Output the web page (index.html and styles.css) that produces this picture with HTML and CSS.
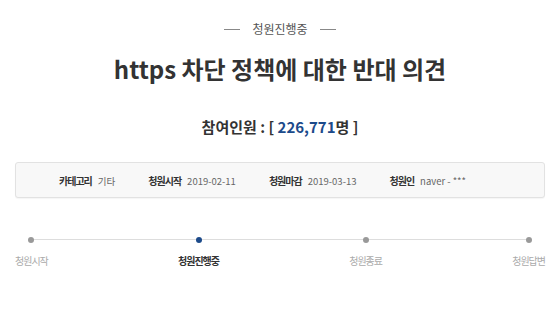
FILE: index.html
```html
<!DOCTYPE html>
<html>

<head>
    <title>청원진행중</title>
    <link rel="stylesheet" href="styles.css">
</head>

<body>
    <div class="page">
        <div class="status"><span class="dash"></span>청원진행중<span class="dash"></span></div>

        <h1 class="title">https 차단 정책에 대한 반대 의견</h1>

        <p class="count">참여인원 : [ <span class="num">226,771</span>명 ]</p>

        <div class="info">
            <div class="info-item"><span class="info-label">카테고리</span><span>기타</span></div>
            <div class="info-item"><span class="info-label">청원시작</span><span>2019-02-11</span></div>
            <div class="info-item"><span class="info-label">청원마감</span><span>2019-03-13</span></div>
            <div class="info-item"><span class="info-label">청원인</span><span>naver - ***</span></div>
        </div>

        <div class="progress">
            <div class="step">
                <span class="dot"></span>
                <span class="step-label">청원시작</span>
            </div>
            <div class="step active">
                <span class="dot"></span>
                <span class="step-label">청원진행중</span>
            </div>
            <div class="step">
                <span class="dot"></span>
                <span class="step-label">청원종료</span>
            </div>
            <div class="step">
                <span class="dot"></span>
                <span class="step-label">청원답변</span>
            </div>
        </div>
    </div>
</body>

</html>
```

FILE: styles.css
```css
body {
    margin: 0;
    background-color: #fff;
    font-family: "Noto Sans CJK KR", "Noto Sans", sans-serif;
    color: #333;
}

.page {
    padding: 21px 15px 0 15px;
}

.status {
    display: flex;
    justify-content: center;
    align-items: center;
    gap: 12px;
    font-size: 12px;
    line-height: 16px;
    color: #555;
}

.dash {
    width: 16px;
    height: 1px;
    background-color: #888;
}

.title {
    margin: 16px 0 0 0;
    text-align: center;
    font-size: 24px;
    line-height: 32px;
    font-weight: bold;
    color: #333;
}

.count {
    margin: 32px 0 0 0;
    text-align: center;
    font-size: 15px;
    line-height: 20px;
    font-weight: bold;
    color: #333;
}

.count .num {
    color: #1c4a8a;
}

.info {
    margin-top: 25px;
    height: 34px;
    display: flex;
    align-items: center;
    gap: 33px;
    padding-left: 43px;
    background-color: #f8f8f8;
    border: 1px solid #e2e2e2;
    border-radius: 3px;
    box-shadow: 0 1px 1px rgba(0, 0, 0, 0.04);
    font-size: 9.5px;
    color: #666;
}

.info-item {
    display: flex;
    align-items: baseline;
    gap: 6px;
}

.info-label {
    font-size: 10px;
    font-weight: bold;
    color: #333;
    letter-spacing: -1px;
}

.progress {
    position: relative;
    margin-top: 39px;
    display: flex;
    justify-content: space-between;
}

.progress::before {
    content: "";
    position: absolute;
    left: 15px;
    right: 15px;
    top: 2px;
    height: 1px;
    background-color: #ddd;
}

.step {
    position: relative;
    display: flex;
    flex-direction: column;
    align-items: center;
    gap: 10px;
}

.dot {
    width: 6px;
    height: 6px;
    border-radius: 50%;
    background-color: #999;
}

.step-label {
    font-size: 10px;
    line-height: 16px;
    color: #aaa;
    letter-spacing: -1px;
}

.active .dot {
    background-color: #1c4a8a;
}

.active .step-label {
    font-weight: bold;
    color: #333;
}
```
